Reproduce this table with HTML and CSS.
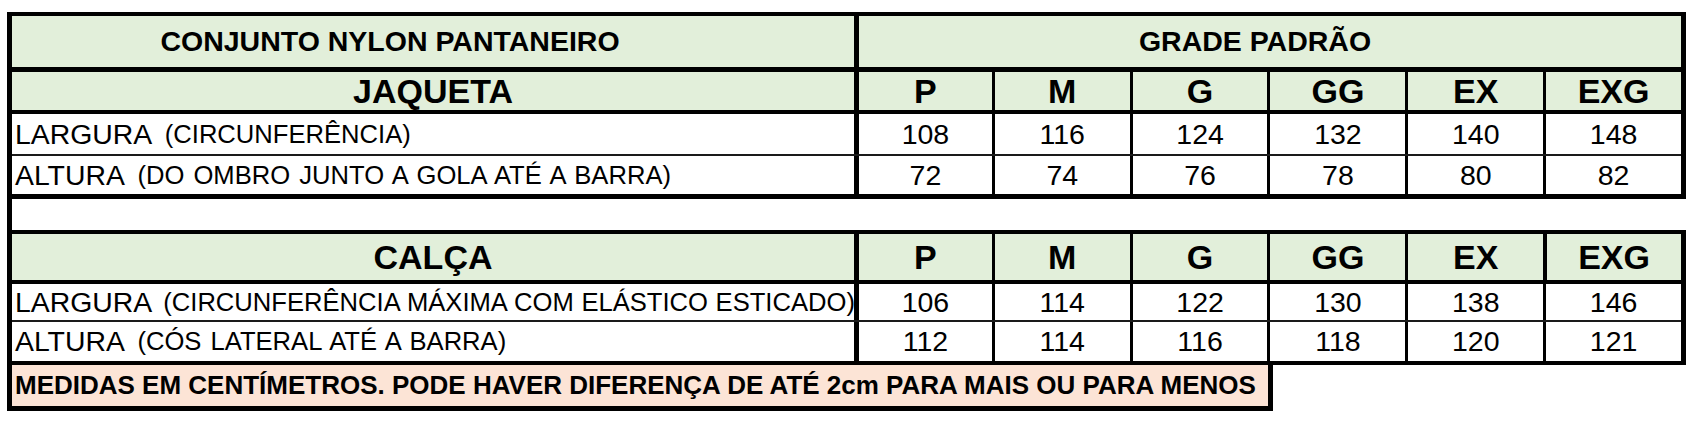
FILE: index.html
```html
<!DOCTYPE html>
<html lang="pt-BR">
<head>
<meta charset="utf-8">
<title>Conjunto Nylon Pantaneiro - Tabela de medidas</title>
<link rel="stylesheet" href="styles.css">
</head>
<body>
<div class="sheet">
  <div class="block block-top">
    <div class="row row-title line-thick">
      <div class="cell title-left">CONJUNTO NYLON PANTANEIRO</div>
      <div class="cell title-right sep-main">GRADE PADRÃO</div>
    </div>
    <div class="row row-head head-a line-med">
      <div class="cell head-name">JAQUETA</div>
      <div class="cell size sep-main">P</div>
      <div class="cell size sep">M</div>
      <div class="cell size sep">G</div>
      <div class="cell size sep">GG</div>
      <div class="cell size sep">EX</div>
      <div class="cell size sep">EXG</div>
    </div>
    <div class="row row-data data-a1 line-thin">
      <div class="cell label"><span class="main">LARGURA</span><span class="paren">(CIRCUNFERÊNCIA)</span></div>
      <div class="cell num sep-main">108</div>
      <div class="cell num sep">116</div>
      <div class="cell num sep">124</div>
      <div class="cell num sep">132</div>
      <div class="cell num sep">140</div>
      <div class="cell num sep">148</div>
    </div>
    <div class="row row-data data-a2">
      <div class="cell label"><span class="main">ALTURA</span><span class="paren">(DO OMBRO JUNTO A GOLA ATÉ A BARRA)</span></div>
      <div class="cell num sep-main">72</div>
      <div class="cell num sep">74</div>
      <div class="cell num sep">76</div>
      <div class="cell num sep">78</div>
      <div class="cell num sep">80</div>
      <div class="cell num sep">82</div>
    </div>
  </div>
  <div class="spacer"></div>
  <div class="block block-bottom">
    <div class="row row-head head-b line-med">
      <div class="cell head-name">CALÇA</div>
      <div class="cell size sep-main">P</div>
      <div class="cell size sep">M</div>
      <div class="cell size sep">G</div>
      <div class="cell size sep">GG</div>
      <div class="cell size sep">EX</div>
      <div class="cell size sep sep-strong">EXG</div>
    </div>
    <div class="row row-data data-b1 line-thin">
      <div class="cell label"><span class="main">LARGURA</span><span class="paren paren-tight">(CIRCUNFERÊNCIA MÁXIMA COM ELÁSTICO ESTICADO)</span></div>
      <div class="cell num sep-main">106</div>
      <div class="cell num sep">114</div>
      <div class="cell num sep">122</div>
      <div class="cell num sep">130</div>
      <div class="cell num sep">138</div>
      <div class="cell num sep">146</div>
    </div>
    <div class="row row-data data-b2">
      <div class="cell label"><span class="main">ALTURA</span><span class="paren">(CÓS LATERAL ATÉ A BARRA)</span></div>
      <div class="cell num sep-main">112</div>
      <div class="cell num sep">114</div>
      <div class="cell num sep">116</div>
      <div class="cell num sep">118</div>
      <div class="cell num sep">120</div>
      <div class="cell num sep">121</div>
    </div>
  </div>
  <div class="footer">MEDIDAS EM CENTÍMETROS. PODE HAVER DIFERENÇA DE ATÉ 2cm PARA MAIS OU PARA MENOS</div>
</div>
</body>
</html>
```

FILE: styles.css
```css
html, body {
  margin: 0;
  padding: 0;
  background: #ffffff;
}

body {
  font-family: "Liberation Sans", Arial, sans-serif;
  color: #000;
}

.sheet {
  margin: 12px 0 0 7px;
  width: 1679px;
  box-sizing: border-box;
  border-left: 5px solid #000;
}

.block {
  border-top: 4px solid #000;
  border-right: 5px solid #000;
}

.block-top {
  border-bottom: 5px solid #000;
}

.block-bottom {
  border-bottom: 4px solid #000;
}

.spacer {
  height: 31px;
}

.row {
  display: grid;
  grid-template-columns: 842px repeat(6, 1fr);
}

.row-title {
  grid-template-columns: 842px 1fr;
  height: 51px;
  background: #e2efda;
}

.line-thick { border-bottom: 5px solid #000; }
.line-med { border-bottom: 4px solid #000; }
.line-thin { border-bottom: 2px solid #1a1a1a; }

.cell {
  box-sizing: border-box;
  display: flex;
  align-items: center;
  white-space: nowrap;
}

.sep-main { border-left: 5px solid #000; }
.sep { border-left: 3px solid #000; }
.sep-strong { border-left-width: 4px; }

.title-left,
.title-right {
  font-weight: bold;
  font-size: 28.5px;
  justify-content: center;
}

.title-left { padding-right: 86px; }
.title-right { padding-right: 30px; }

.row-head {
  background: #e2efda;
}

.head-a { height: 38px; }
.head-b { height: 46px; }

.head-name,
.size {
  font-weight: bold;
  font-size: 34px;
  justify-content: center;
}

.row-data {
  background: #fff;
}

.data-a1 { height: 40px; }
.data-a2 { height: 38px; }
.data-b1 { height: 36px; }
.data-b2 { height: 39px; }

.label {
  padding-left: 3px;
  overflow: hidden;
}

.label .main {
  font-size: 28.4px;
}

.label .paren {
  font-size: 25.6px;
  margin-left: 12.5px;
  word-spacing: 2px;
}

.label .paren-tight {
  margin-left: 11px;
  word-spacing: 0.5px;
}

.num {
  font-size: 28.5px;
  justify-content: center;
}

.footer {
  width: 1253px;
  height: 41px;
  box-sizing: content-box;
  border-right: 5px solid #000;
  border-bottom: 5px solid #000;
  background: #fce4d6;
  font-weight: bold;
  font-size: 26px;
  display: flex;
  align-items: center;
  padding-left: 3px;
  white-space: nowrap;
}
```
